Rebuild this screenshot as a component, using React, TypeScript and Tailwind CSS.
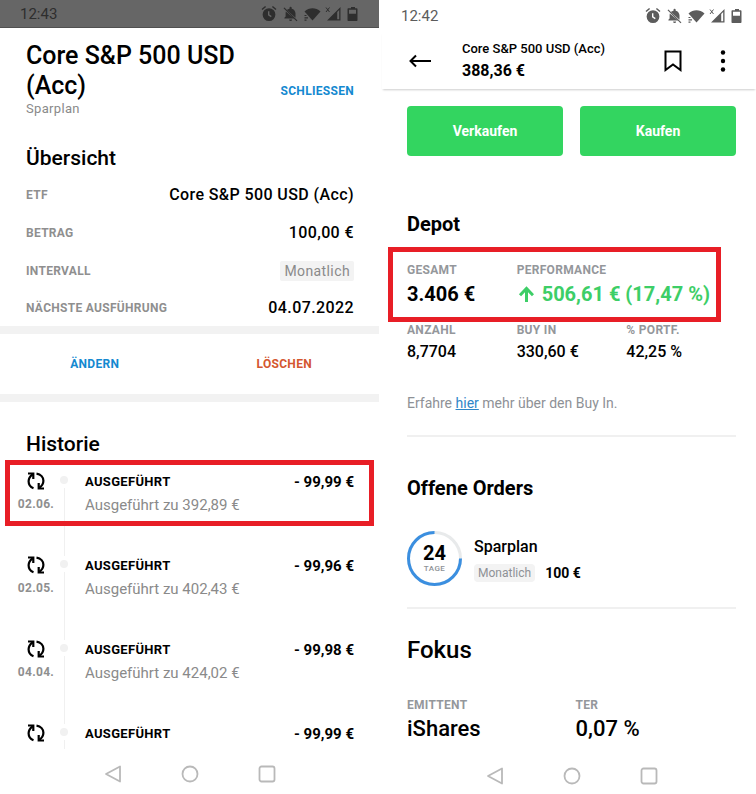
import type { ReactNode } from 'react';

interface Execution {
  date: string;
  price?: string;
  amount: string;
  highlighted?: boolean;
}

const executions: Execution[] = [
  { date: '02.06.', price: '392,89 €', amount: '- 99,99 €', highlighted: true },
  { date: '02.05.', price: '402,43 €', amount: '- 99,96 €' },
  { date: '04.04.', price: '424,02 €', amount: '- 99,98 €' },
  { date: '', amount: '- 99,99 €' }
];

function StatusIcons() {
  return (
    <svg width="98" height="18" viewBox="0 0 98 18" fill="currentColor" aria-hidden="true">
      {/* alarm */}
      <g transform="translate(1 0)">
        <path fillRule="evenodd" d="M8 3.2a6.4 6.4 0 1 1 0 12.8A6.4 6.4 0 0 1 8 3.2Zm-1 3v4l2.9 2 .8-1.1-2.3-1.500V6.200Z" />
        <path d="m1 4.500 3.600-3M15 4.500l-3.600-3" stroke="currentColor" strokeWidth="1.500" fill="none" />
      </g>
      {/* muted bell */}
      <g transform="translate(1 0)">
        <path d="M25.8 5.1c.8-.7 1.7-1.2 2.7-1.4V2.9a1.1 1.1 0 0 1 2.2 0v.8c2.3.5 3.8 2.4 3.8 4.9v4.1ZM24.8 6.5l8.4 7.1H23.4v-.8l1.2-1.2V8.5c0-.8.1-1.4.2-2ZM28.1 14.5h3a1.5 1.5 0 0 1-3 0Z" />
        <path d="m23 2.900 13 13" stroke="currentColor" strokeWidth="1.300" />
      </g>
      {/* wifi with traffic marks */}
      <path d="M44.500 6.500c4.800-4.300 11.200-4.300 16 0L52.500 15.500Z" />
      <path d="M44.500 10.500h2M44.500 12.800h3.500M44.500 15.100h2" stroke="currentColor" strokeWidth="1.200" />
      {/* mobile signal */}
      <g transform="translate(1 0)">
        <path fillRule="evenodd" d="M79.500 2v13.500H66ZM78.200 5l-2 2v7.200h2Z" />
        <path d="m65 2.500 3.500 4.500M68.500 2.500 65 7" stroke="currentColor" strokeWidth="1" />
      </g>
      {/* battery */}
      <path fillRule="evenodd" d="M89 3.200h2V2h4v1.200h1.500c.6 0 1 .4 1 1v10.800c0 .6-.4 1-1 1h-8c-.6 0-1-.4-1-1V4.200c0-.6.4-1 1-1Zm0 1.500v4h7v-4Z" />
    </svg>
  );
}

function StatusBar({ time, className }: { time: string; className: string }) {
  return (
    <div className={`flex items-center justify-between ${className}`}>
      <span className="text-[15px] leading-5">{time}</span>
      <StatusIcons />
    </div>
  );
}

function SystemNav() {
  return (
    <nav className="flex justify-center gap-[59px] text-[#b9b9b9]" aria-label="System">
      <button type="button" aria-label="Zurück">
        <svg width="18" height="18" viewBox="0 0 18 18" fill="none" stroke="currentColor" strokeWidth="1.8" strokeLinejoin="round">
          <path d="M16 1.5v15L2 9Z" />
        </svg>
      </button>
      <button type="button" aria-label="Startseite">
        <svg width="18" height="18" viewBox="0 0 18 18" fill="none" stroke="currentColor" strokeWidth="1.8">
          <circle cx="9" cy="9" r="7.5" />
        </svg>
      </button>
      <button type="button" aria-label="Letzte Apps">
        <svg width="18" height="18" viewBox="0 0 18 18" fill="none" stroke="currentColor" strokeWidth="1.8">
          <rect x="1.5" y="1.5" width="15" height="15" rx="2" />
        </svg>
      </button>
    </nav>
  );
}

function RepeatIcon() {
  return (
    <svg
      className="shrink-0"
      width="18"
      height="18"
      viewBox="0 0 18 18"
      fill="none"
      stroke="currentColor"
      strokeWidth="2.2"
      aria-hidden="true"
    >
      <path d="M6.5 16.3C3.200 15 1.600 12 1.600 9.300c0-2.600 1.300-5 4.200-7.200" />
      <path d="M1 1.500h5.300V7" />
      <path d="M9.500 1.600c4.500.6 6.900 3.800 6.900 7.100 0 2.800-1.300 5.100-4.200 7.200" />
      <path d="M17 16.500h-5.300V11" />
    </svg>
  );
}

function DetailRow({ label, children }: { label: string; children: ReactNode }) {
  return (
    <div className="flex h-[38px] items-center justify-between last:h-9">
      <dt className="text-xs font-bold tracking-wide text-[#8f8f8f]">{label}</dt>
      <dd className="text-base leading-5 font-medium tracking-wide">{children}</dd>
    </div>
  );
}

function ExecutionRow({ execution }: { execution: Execution }) {
  const { date, price, amount, highlighted } = execution;

  return (
    <li className="relative flex h-[84px] pt-3 pr-[25px] pl-[18px] last:h-[25px]">
      {highlighted && (
        <div className="absolute top-0 right-[5px] left-[5px] h-[66px] border-[5px] border-[#e81e26]" />
      )}
      <div className="flex w-9 flex-col items-center">
        <RepeatIcon />
        <span className="mt-1.5 text-xs font-bold tracking-wide text-[#8f8f8f]">{date}</span>
      </div>
      <div className="ml-1.5 flex w-2 flex-col items-center gap-1 pt-1">
        <span className="size-2 shrink-0 rounded-full bg-[#f1f1f1]" />
        <span className="-mb-3 w-px grow bg-[#f0f0f0]" />
      </div>
      <div className="ml-[17px] grow">
        <p className="text-[13px] leading-5 font-bold tracking-wide">AUSGEFÜHRT</p>
        {price && <p className="mt-[3px] text-[15px] leading-5 text-[#8a8a8a]">Ausgeführt zu {price}</p>}
      </div>
      <p className="text-[15px] leading-5 font-bold whitespace-nowrap">{amount}</p>
    </li>
  );
}

function SavingsPlanScreen() {
  return (
    <section className="flex flex-col bg-white">
      <StatusBar time="12:43" className="h-7 border-b border-[#505050] bg-[#666] pr-[21px] pl-5 text-[#2e2e2e]" />
      <header className="flex items-end justify-between pt-[13px] pr-[25px] pl-[26px]">
        <div>
          <h1 className="max-w-[220px] text-[25px] leading-[30px] font-medium">Core S&amp;P 500 USD (Acc)</h1>
          <p className="text-[13px] leading-4 tracking-wide text-[#8a8a8a]">Sparplan</p>
        </div>
        <button type="button" className="mb-[18px] text-xs font-bold tracking-wide text-[#1489d0]">
          SCHLIESSEN
        </button>
      </header>

      <h2 className="mt-[27px] pr-[25px] pl-[26px] text-[21px] leading-7 font-medium">Übersicht</h2>
      <dl className="mt-1 pr-[25px] pl-[26px]">
        <DetailRow label="ETF">Core S&amp;P 500 USD (Acc)</DetailRow>
        <DetailRow label="BETRAG">100,00 €</DetailRow>
        <DetailRow label="INTERVALL">
          <span className="block rounded-xs bg-[#f3f3f3] px-1 text-sm leading-5 font-normal text-[#8a8a8a]">
            Monatlich
          </span>
        </DetailRow>
        <DetailRow label="NÄCHSTE AUSFÜHRUNG">04.07.2022</DetailRow>
      </dl>

      <div className="grid h-[76px] grid-cols-2 border-y-8 border-[#f2f2f2] text-xs font-bold tracking-wide">
        <button type="button" className="text-[#1489d0]">
          ÄNDERN
        </button>
        <button type="button" className="text-[#d4572f]">
          LÖSCHEN
        </button>
      </div>

      <h2 className="mt-7 pr-[25px] pl-[26px] text-[21px] leading-7 font-medium">Historie</h2>
      <ul className="mt-0.5">
        {executions.map((execution, index) => (
          <ExecutionRow key={index} execution={execution} />
        ))}
      </ul>
      <div className="pt-7">
        <SystemNav />
      </div>
    </section>
  );
}

interface StatProps {
  label: string;
  children: ReactNode;
  className?: string;
  valueClassName: string;
}

function Stat({ label, children, className = '', valueClassName }: StatProps) {
  return (
    <div className={className}>
      <dt className="text-xs font-bold tracking-wide text-[#94979b]">{label}</dt>
      <dd className={`whitespace-nowrap ${valueClassName}`}>{children}</dd>
    </div>
  );
}

function DaysRing() {
  return (
    <div className="relative grid size-[55px] place-content-center text-center">
      <svg className="absolute inset-0" viewBox="0 0 55 55" fill="none" strokeWidth="3" aria-hidden="true">
        <circle cx="27.5" cy="27.5" r="26" stroke="#e8eaeb" />
        <path d="M53.5 27.5A26 26 0 1 1 27.5 1.5" stroke="#3b8fe0" />
      </svg>
      <span className="text-xl leading-5 font-bold">24</span>
      <span className="text-[8px] leading-3 font-medium tracking-wider text-[#8e9196]">TAGE</span>
    </div>
  );
}

function PositionScreen() {
  return (
    <section className="flex flex-col bg-white">
      <StatusBar time="12:42" className="h-8 pr-3.5 pl-[19px] text-[#5c5c5c]" />
      <header className="flex h-[57px] items-center pr-7 pl-[27px] shadow-[0_2px_2px_-1px_rgba(0,0,0,0.2)]">
        <button type="button" aria-label="Zurück">
          <svg width="22" height="14" viewBox="0 0 22 14" fill="none" stroke="currentColor" strokeWidth="2">
            <path d="M22 7H2M7 1.5 1.5 7 7 12.5" />
          </svg>
        </button>
        <div className="ml-[31px] grow whitespace-nowrap">
          <h1 className="text-[13px] leading-5 font-medium">Core S&amp;P 500 USD (Acc)</h1>
          <p className="text-base leading-6 font-bold">388,36 €</p>
        </div>
        <button type="button" aria-label="Merken">
          <svg width="18" height="22" viewBox="0 0 18 22" fill="none" stroke="currentColor" strokeWidth="2">
            <path d="M1.5 1.5h15V20L9 14.5 1.5 20Z" />
          </svg>
        </button>
        <button type="button" aria-label="Mehr" className="ml-9">
          <svg width="10" height="22" viewBox="0 0 10 22" fill="currentColor">
            <circle cx="5" cy="2.5" r="2.2" />
            <circle cx="5" cy="11" r="2.2" />
            <circle cx="5" cy="19.5" r="2.2" />
          </svg>
        </button>
      </header>

      <main className="pr-5 pl-[25px]">
        <div className="mt-[17px] grid grid-cols-2 gap-[17px] text-sm font-bold text-white">
          <button type="button" className="h-[50px] rounded bg-[#33d560]">
            Verkaufen
          </button>
          <button type="button" className="h-[50px] rounded bg-[#33d560]">
            Kaufen
          </button>
        </div>

        <h2 className="mt-[54px] text-xl leading-7 font-bold">Depot</h2>
        <dl className="mt-[9px]">
          <div className="relative grid grid-cols-3 pt-[15px] pb-3.5">
            <div className="absolute inset-y-0 -left-[19px] right-[15px] border-[5px] border-[#e81e26]" />
            <Stat label="GESAMT" valueClassName="mt-0.5 text-xl leading-7 font-bold">
              3.406 €
            </Stat>
            <Stat
              label="PERFORMANCE"
              className="col-span-2"
              valueClassName="mt-0.5 flex items-center gap-2 text-xl leading-7 font-bold text-[#3dce67]"
            >
              <svg width="17" height="16" viewBox="0 0 17 16" fill="none" stroke="currentColor" strokeWidth="3" aria-hidden="true">
                <path d="M9.500 16V3M3 9.300l6.500-6.800L16 9.300" />
              </svg>
              506,61 € (17,47 %)
            </Stat>
          </div>
          <div className="grid grid-cols-3">
            <Stat label="ANZAHL" valueClassName="mt-0.5 text-base leading-6 font-medium">
              8,7704
            </Stat>
            <Stat label="BUY IN" valueClassName="mt-0.5 text-base leading-6 font-medium">
              330,60 €
            </Stat>
            <Stat label="% PORTF." valueClassName="mt-0.5 text-base leading-6 font-medium">
              42,25 %
            </Stat>
          </div>
        </dl>
        <p className="mt-[29px] text-sm leading-5 text-[#8e9196]">
          Erfahre{' '}
          <a href="#buy-in" className="text-[#2f86c8] underline">
            hier
          </a>{' '}
          mehr über den Buy In.
        </p>
        <hr className="mt-[22px] border-t-2 border-[#f0f0f0]" />

        <h2 className="mt-[37px] text-xl leading-7 font-bold">Offene Orders</h2>
        <div className="mt-[29px] flex items-center gap-3">
          <DaysRing />
          <div>
            <p className="text-base leading-6 font-medium">Sparplan</p>
            <div className="mt-1 flex items-center gap-2.5">
              <span className="rounded-sm bg-[#f3f3f3] px-1 text-xs leading-[18px] text-[#8e9196]">Monatlich</span>
              <span className="text-sm leading-5 font-bold">100 €</span>
            </div>
          </div>
        </div>
        <hr className="mt-[21px] border-t-2 border-[#f0f0f0]" />

        <h2 className="mt-[25px] text-2xl leading-8 font-medium">Fokus</h2>
        <dl className="mt-[31px] grid grid-cols-2 gap-2">
          <Stat label="EMITTENT" valueClassName="mt-0.5 text-[22px] leading-7 font-medium">
            iShares
          </Stat>
          <Stat label="TER" valueClassName="mt-0.5 text-[22px] leading-7 font-medium">
            0,07 %
          </Stat>
        </dl>
      </main>
      <div className="pt-6 pl-1.5">
        <SystemNav />
      </div>
    </section>
  );
}

export default function App() {
  return (
    <div className="grid min-h-screen grid-cols-[379fr_374fr] gap-[3px] bg-white font-['Roboto','Liberation_Sans',sans-serif] text-black">
      <SavingsPlanScreen />
      <PositionScreen />
    </div>
  );
}
